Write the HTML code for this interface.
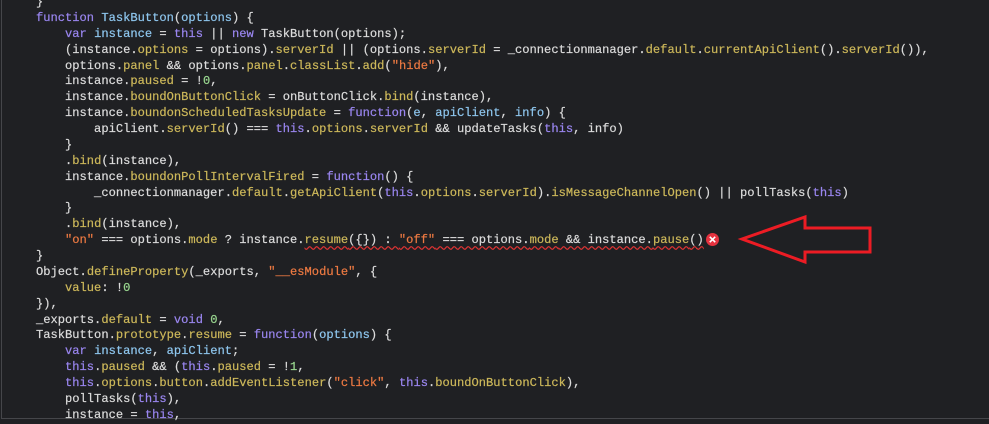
<!DOCTYPE html>
<html><head><meta charset="utf-8"><style>
html,body{margin:0;padding:0}
body{width:989px;height:420px;overflow:hidden;background:#1f2023;position:relative}
.frame{position:absolute;left:1px;top:-2px;width:990px;height:421px;border-left:1px solid #45464a;border-bottom:1px solid #45464a;box-sizing:border-box}
pre{position:absolute;left:36px;top:-5px;margin:0;font-family:"Liberation Mono",monospace;font-size:12.1px;line-height:15.88px;color:#dcdcdc;white-space:pre;-webkit-text-stroke:0.2px currentColor}
.k{color:#9a86f0}.v{color:#8ec6ee}.p{color:#cdb85a}.s{color:#ee7a42}.n{color:#9ad890}
.sq{text-decoration:underline wavy #d33;text-decoration-skip-ink:none;text-underline-offset:2px}
</style></head><body>
<div class="frame"></div>
<pre>}
<span class="k">function</span> <span class="v">TaskButton</span>(<span class="v">options</span>) {
    <span class="k">var</span> <span class="v">instance</span> = <span class="k">this</span> || <span class="k">new</span> TaskButton(options);
    (instance.<span class="p">options</span> = options).<span class="p">serverId</span> || (options.<span class="p">serverId</span> = _connectionmanager.<span class="p">default</span>.<span class="p">currentApiClient</span>().<span class="p">serverId</span>()),
    options.<span class="p">panel</span> &amp;&amp; options.<span class="p">panel</span>.<span class="p">classList</span>.<span class="p">add</span>(<span class="s">"hide"</span>),
    instance.<span class="p">paused</span> = !<span class="n">0</span>,
    instance.<span class="p">boundOnButtonClick</span> = onButtonClick.<span class="p">bind</span>(instance),
    instance.<span class="p">boundonScheduledTasksUpdate</span> = <span class="k">function</span>(<span class="v">e</span>, <span class="v">apiClient</span>, <span class="v">info</span>) {
        apiClient.<span class="p">serverId</span>() === <span class="k">this</span>.<span class="p">options</span>.<span class="p">serverId</span> &amp;&amp; updateTasks(<span class="k">this</span>, info)
    }
    .<span class="p">bind</span>(instance),
    instance.<span class="p">boundonPollIntervalFired</span> = <span class="k">function</span>() {
        _connectionmanager.<span class="p">default</span>.<span class="p">getApiClient</span>(<span class="k">this</span>.<span class="p">options</span>.<span class="p">serverId</span>).<span class="p">isMessageChannelOpen</span>() || pollTasks(<span class="k">this</span>)
    }
    .<span class="p">bind</span>(instance),
    <span class="s">"on"</span> === options.<span class="p">mode</span> ? instance.<span class="p sq">resume</span><span class="sq">({}) : </span><span class="s sq">"off"</span><span class="sq"> === options.</span><span class="p sq">mode</span><span class="sq"> &amp;&amp; instance.</span><span class="p sq">pause</span><span class="sq">()</span>
}
Object.<span class="p">defineProperty</span>(_exports, <span class="s">"__esModule"</span>, {
    <span class="p">value</span>: !<span class="n">0</span>
}),
_exports.<span class="p">default</span> = <span class="k">void</span> <span class="n">0</span>,
TaskButton.<span class="p">prototype</span>.<span class="p">resume</span> = <span class="k">function</span>(<span class="v">options</span>) {
    <span class="k">var</span> <span class="v">instance</span>, <span class="v">apiClient</span>;
    <span class="k">this</span>.<span class="p">paused</span> &amp;&amp; (<span class="k">this</span>.<span class="p">paused</span> = !<span class="n">1</span>,
    <span class="k">this</span>.<span class="p">options</span>.<span class="p">button</span>.<span class="p">addEventListener</span>(<span class="s">"click"</span>, <span class="k">this</span>.<span class="p">boundOnButtonClick</span>),
    pollTasks(<span class="k">this</span>),
    instance = <span class="k">this</span>,
</pre>
<svg style="position:absolute;left:0;top:0" width="989" height="420">
<circle cx="712.5" cy="239.5" r="6.5" fill="#e5323f"/>
<path d="M709.8 236.8l5.4 5.4M715.2 236.8l-5.4 5.4" stroke="#fff" stroke-width="1.6"/>
<polygon points="742,239 805,217 805,228 870,228 870,252 805,252 805,262" fill="none" stroke="#ec1c24" stroke-width="3" stroke-linejoin="miter"/>
</svg>
</body></html>
